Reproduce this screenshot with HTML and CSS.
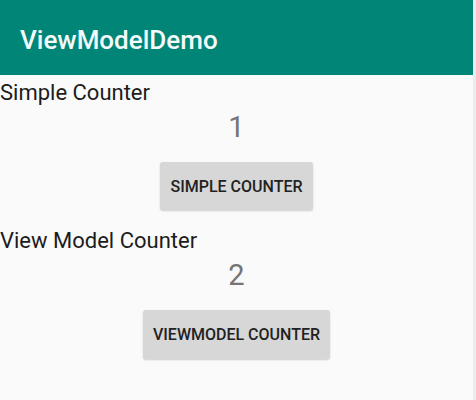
FILE: index.html
```html
<!DOCTYPE html>
<html>
<head>
<meta charset="utf-8">
<link rel="stylesheet" href="styles.css">
</head>
<body>
<div class="screen">
  <header class="appbar"><span class="title">ViewModelDemo</span></header>
  <main class="content">
    <div class="label first">Simple Counter</div>
    <div class="count">1</div>
    <button class="btn btn-simple">SIMPLE COUNTER</button>
    <div class="label second">View Model Counter</div>
    <div class="count">2</div>
    <button class="btn btn-vm">VIEWMODEL COUNTER</button>
  </main>
</div>
</body>
</html>
```
FILE: styles.css
```css
html, body {
  margin: 0;
  padding: 0;
}
body {
  background: #fafafa;
  font-family: Roboto, "Noto Sans", sans-serif;
  width: 476px;
  height: 400px;
  overflow: hidden;
}
.screen {
  display: flex;
  flex-direction: column;
  height: 400px;
  box-sizing: border-box;
  border-right: 3px solid #ececec;
}
.appbar {
  height: 75px;
  background: #008577;
  display: flex;
  align-items: flex-start;
  padding-left: 20px;
  box-sizing: border-box;
}
.title {
  color: #f4fbfa;
  font-size: 26px;
  font-weight: 500;
  line-height: 30px;
  margin-top: 25px;
}
.content {
  display: flex;
  flex-direction: column;
  align-items: center;
}
.label {
  align-self: flex-start;
  font-size: 22px;
  line-height: 26px;
  color: #1c1c1c;
}
.label.first { margin-top: 5px; }
.label.second { margin-top: 18px; }
.count {
  font-size: 29px;
  line-height: 34px;
  color: #757575;
  margin-top: 4px;
}
.btn {
  margin-top: 18px;
  border: none;
  border-radius: 3px;
  background: #d7d7d7;
  box-shadow: 0 1px 2px rgba(0,0,0,0.18);
  font-family: Roboto, "Noto Sans", sans-serif;
  font-weight: 500;
  font-size: 16px;
  color: #222;
  padding: 0;
  display: flex;
  align-items: center;
  justify-content: center;
}
.btn-simple { width: 153px; height: 48px; }
.btn-vm { width: 187px; height: 49px; }
```
